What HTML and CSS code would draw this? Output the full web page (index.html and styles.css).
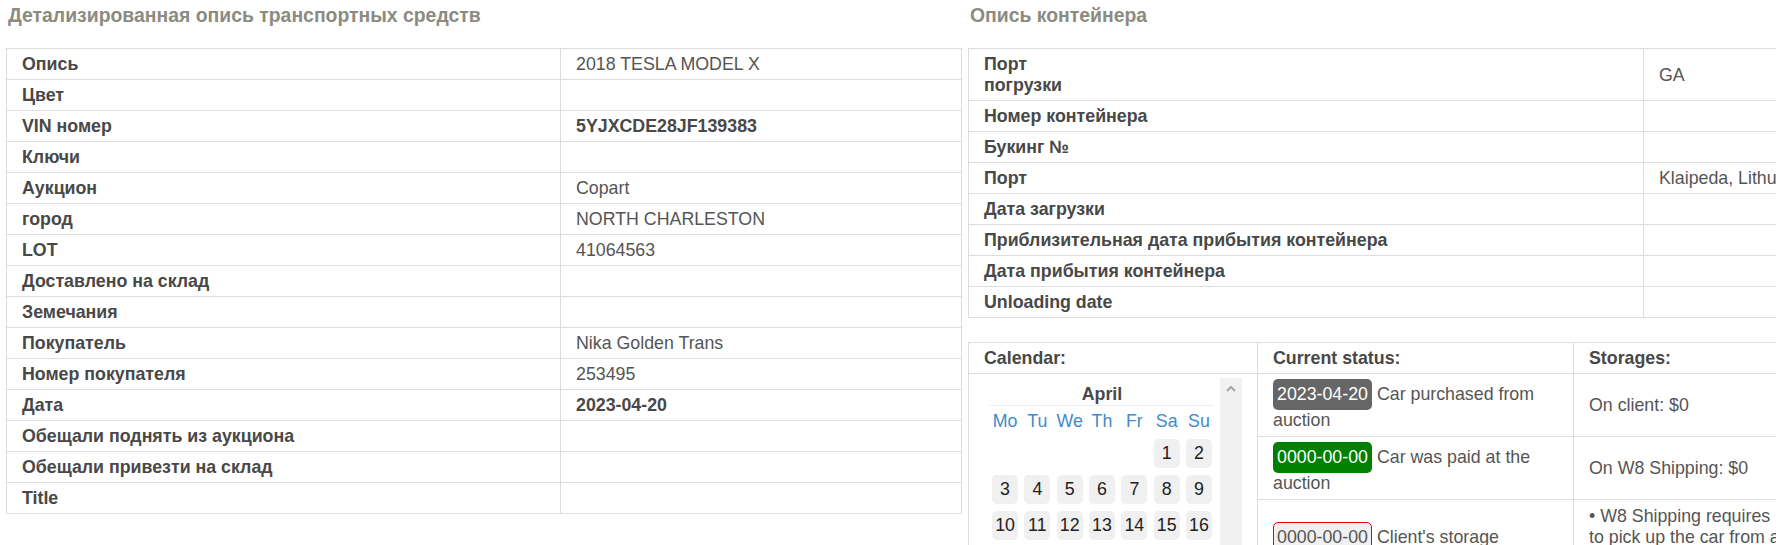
FILE: index.html
```html
<!DOCTYPE html>
<html lang="ru">
<head>
<meta charset="utf-8">
<title>Опись</title>
<link rel="stylesheet" href="styles.css">
</head>
<body>
<div class="page">
  <section class="col col-left">
    <h4 class="title">Детализированная опись транспортных средств</h4>
    <table class="info info-left">
      <colgroup><col class="c-label-l"><col></colgroup>
      <tr><th>Опись</th><td>2018 TESLA MODEL X</td></tr>
      <tr><th>Цвет</th><td></td></tr>
      <tr><th>VIN номер</th><td class="b">5YJXCDE28JF139383</td></tr>
      <tr><th>Ключи</th><td></td></tr>
      <tr><th>Аукцион</th><td>Copart</td></tr>
      <tr><th>город</th><td>NORTH CHARLESTON</td></tr>
      <tr><th>LOT</th><td>41064563</td></tr>
      <tr><th>Доставлено на склад</th><td></td></tr>
      <tr><th>Земечания</th><td></td></tr>
      <tr><th>Покупатель</th><td>Nika Golden Trans</td></tr>
      <tr><th>Номер покупателя</th><td>253495</td></tr>
      <tr><th>Дата</th><td class="b">2023-04-20</td></tr>
      <tr><th>Обещали поднять из аукциона</th><td></td></tr>
      <tr><th>Обещали привезти на склад</th><td></td></tr>
      <tr><th>Title</th><td></td></tr>
    </table>
  </section>

  <section class="col col-right">
    <h4 class="title">Опись контейнера</h4>
    <table class="info info-right">
      <colgroup><col class="c-label-r"><col></colgroup>
      <tr><th>Порт<br>погрузки</th><td>GA</td></tr>
      <tr><th>Номер контейнера</th><td></td></tr>
      <tr><th>Букинг №</th><td></td></tr>
      <tr><th>Порт</th><td>Klaipeda, Lithuania</td></tr>
      <tr><th>Дата загрузки</th><td></td></tr>
      <tr><th>Приблизительная дата прибытия контейнера</th><td></td></tr>
      <tr><th>Дата прибытия контейнера</th><td></td></tr>
      <tr><th>Unloading date</th><td></td></tr>
    </table>

    <table class="info status">
      <colgroup><col class="c-cal"><col class="c-status"><col></colgroup>
      <tr><th>Calendar:</th><th>Current status:</th><th>Storages:</th></tr>
      <tr>
        <td rowspan="4" class="cal-cell">
          <div class="cal-box">
            <div class="cal-body">
              <div class="cal-month">April</div>
              <div class="cal-grid">
                <span class="wd">Mo</span><span class="wd">Tu</span><span class="wd">We</span><span class="wd">Th</span><span class="wd">Fr</span><span class="wd">Sa</span><span class="wd">Su</span>
                <span class="empty"></span><span class="empty"></span><span class="empty"></span><span class="empty"></span><span class="empty"></span><span class="day">1</span><span class="day">2</span>
                <span class="day">3</span><span class="day">4</span><span class="day">5</span><span class="day">6</span><span class="day">7</span><span class="day">8</span><span class="day">9</span>
                <span class="day">10</span><span class="day">11</span><span class="day">12</span><span class="day">13</span><span class="day">14</span><span class="day">15</span><span class="day">16</span>
                <span class="day">17</span><span class="day">18</span><span class="day">19</span><span class="day today">20</span><span class="day">21</span><span class="day">22</span><span class="day">23</span>
                <span class="day">24</span><span class="day">25</span><span class="day">26</span><span class="day">27</span><span class="day">28</span><span class="day">29</span><span class="day">30</span>
              </div>
            </div>
            <div class="cal-scroll">
              <svg class="arrow" width="10" height="7" viewBox="0 0 10 7"><path d="M1 6 L5 2 L9 6" fill="none" stroke="#a6a6a6" stroke-width="2"/></svg>
            </div>
          </div>
        </td>
        <td class="st"><span class="badge badge-dark">2023-04-20</span> Car purchased from auction</td>
        <td class="stor">On client: $0</td>
      </tr>
      <tr>
        <td class="st"><span class="badge badge-green">0000-00-00</span> Car was paid at the auction</td>
        <td class="stor">On W8 Shipping: $0</td>
      </tr>
      <tr>
        <td class="st"><span class="badge badge-red">0000-00-00</span> Client's storage</td>
        <td class="stor top">• W8 Shipping requires<br>to pick up the car from auction<br>within 3 days after payment.</td>
      </tr>
      <tr>
        <td class="st"><span class="badge badge-red">0000-00-00</span> Car delivered to warehouse</td>
        <td class="stor"></td>
      </tr>
    </table>
  </section>
</div>
</body>
</html>
```

FILE: styles.css
```css
html, body {
  margin: 0;
  padding: 0;
  overflow: hidden;
  background: #fff;
}

body {
  font-family: "Liberation Sans", Arial, sans-serif;
  font-size: 17.8px;
  color: #555;
}

.page {
  display: flex;
  gap: 6px;
  padding-left: 6px;
  width: 1920px;
}

.col {
  width: 956px;
  flex: none;
}

.title {
  margin: 4px 0 0 2px;
  height: 22px;
  font-size: 19.4px;
  line-height: 22px;
  font-weight: bold;
  color: #8b8b82;
}

.info {
  width: 956px;
  border-collapse: collapse;
  border: 1px solid #ddd;
  table-layout: fixed;
}

.info-left,
.info-right {
  margin-top: 22px;
}

.c-label-l { width: 554px; }
.c-label-r { width: 675px; }
.c-cal { width: 289px; }
.c-status { width: 316px; }

.info th,
.info td {
  border: 1px solid #ddd;
  padding: 5px 15px 4px;
  line-height: 21px;
  text-align: left;
  vertical-align: top;
  white-space: nowrap;
  overflow: hidden;
}

.info th {
  font-weight: bold;
  color: #484848;
}

.info td {
  color: #555;
}

.info td.b {
  font-weight: bold;
  color: #484848;
}

.info-right td {
  vertical-align: middle;
}

/* status table */
.status {
  margin-top: 24px;
}

.status td.st,
.status td.stor {
  white-space: normal;
  vertical-align: middle;
  padding: 5px 15px 5px;
}

.status td.stor.top {
  vertical-align: top;
  padding-top: 6px;
}

.badge {
  display: inline-block;
  padding: 3px 4px;
  line-height: 25px;
  border-radius: 5px;
  box-sizing: border-box;
  height: 31px;
}

.badge-dark {
  background: #666;
  color: #fff;
}

.badge-green {
  background: #008000;
  color: #fff;
}

.badge-red {
  background: #f0f0f0;
  color: #555;
  border: 1px solid #e00;
  padding: 2px 3px;
}

/* calendar */
.status td.cal-cell {
  padding: 4px 15px 0 15px;
}

.cal-box {
  display: flex;
  height: 260px;
}

.cal-body {
  flex: 1;
  padding: 6px 6px 0;
  min-width: 0;
}

.cal-month {
  text-align: center;
  font-weight: bold;
  color: #484848;
  line-height: 21px;
  border-bottom: 1px solid #eee;
}

.cal-grid {
  display: grid;
  grid-template-columns: repeat(7, 26px);
  grid-auto-rows: 29px;
  grid-template-rows: 21px;
  column-gap: 6.33px;
  row-gap: 7px;
  justify-content: center;
  margin-top: 5px;
}

.cal-grid span {
  display: flex;
  align-items: center;
  justify-content: center;
}

.wd {
  color: #428bca;
  line-height: 21px;
}

.day {
  background: #f0f0f0;
  border-radius: 5px;
  color: #222;
}

.day.today {
  background: #666;
  color: #fff;
}

.cal-scroll {
  width: 22px;
  flex: none;
  background: #f1f1f1;
  display: flex;
  justify-content: center;
  padding-top: 7px;
  box-sizing: border-box;
}

.arrow {
  display: block;
}
```
